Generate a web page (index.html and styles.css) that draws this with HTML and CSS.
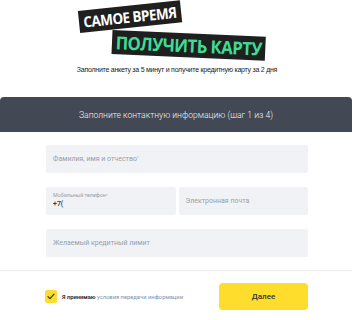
FILE: index.html
```html
<!DOCTYPE html>
<html lang="ru">
<head>
<meta charset="utf-8">
<link rel="stylesheet" href="styles.css">
</head>
<body>
<div class="page">
  <header class="hero">
    <div class="titles">
      <span class="tag tag-white">САМОЕ ВРЕМЯ</span>
      <span class="tag tag-green">ПОЛУЧИТЬ КАРТУ</span>
    </div>
    <p class="subtitle">Заполните анкету за 5 минут и получите кредитную карту за 2 дня</p>
  </header>
  <section class="card">
    <div class="card-head">Заполните контактную информацию (шаг 1 из 4)</div>
    <div class="card-body">
      <div class="field"><span class="ph">Фамилия, имя и отчество<sup>*</sup></span></div>
      <div class="row">
        <div class="field field-filled">
          <span class="label">Мобильный телефон<sup>*</sup></span>
          <span class="value">+7(</span>
        </div>
        <div class="field"><span class="ph">Электронная почта</span></div>
      </div>
      <div class="field"><span class="ph">Желаемый кредитный лимит</span></div>
    </div>
    <div class="card-foot">
      <label class="agree">
        <span class="check"><svg width="8" height="7" viewBox="0 0 8 7"><path d="M1 3.6 L3 5.6 L7 1.2" fill="none" stroke="#333" stroke-width="1.2" stroke-linecap="round" stroke-linejoin="round"/></svg></span>
        <span class="agree-text"><b>Я принимаю</b> <span class="link">условия передачи информации</span></span>
      </label>
      <button class="btn">Далее</button>
    </div>
  </section>
</div>
</body>
</html>
```
FILE: styles.css
```css
* { box-sizing: border-box; }
html, body { margin: 0; padding: 0; background: #ffffff; }
body { font-family: Roboto, "Liberation Sans", Arial, sans-serif; color: #333; }
.page { width: 354px; height: 320px; overflow: hidden; }

.hero { height: 97px; padding-top: 11px; }
.titles { display: flex; flex-direction: column; align-items: flex-start; margin-left: 79px; }
.tag {
  display: inline-block;
  background: #1f1f1f;
  font-family: "Open Sans", "DejaVu Sans", sans-serif;
  font-weight: 700;
  letter-spacing: -0.6px;
  white-space: nowrap;
  transform-origin: left center;
}
.tag-white { color: #ffffff; font-size: 15px; line-height: 22px; padding: 0 5px; transform: rotate(-6deg) scaleX(0.9); }
.tag-green { color: #3ddc97; font-size: 18px; line-height: 24px; padding: 0 4px; margin: -3px 0 0 33px; transform: rotate(2.5deg) scaleX(0.93); }

.subtitle {
  margin: 12px 0 0;
  text-align: center;
  font-family: "Liberation Sans", Arial, sans-serif;
  font-size: 7px;
  letter-spacing: -0.25px;
  color: #222;
}

.card { width: 352px; }
.card-head {
  height: 35px;
  background: #424854;
  border-radius: 4px 4px 0 0;
  color: #f2f3f5;
  font-weight: 300;
  font-size: 8.6px;
  display: flex; align-items: center; justify-content: center;
}
.card-body { padding: 13px 44px 13px 46px; display: flex; flex-direction: column; gap: 14px; }
.row { display: flex; gap: 3px; }
.row .field { flex: 1; }
.field {
  height: 28px;
  background: #f0f2f6;
  border-radius: 2px;
  padding: 0 7px;
  display: flex; flex-direction: column; justify-content: center;
}
.ph { font-size: 7px; color: #9aa0a8; }
.ph sup, .label sup { font-size: 4px; vertical-align: top; }
.field-filled { justify-content: flex-start; padding-top: 5px; }
.label { font-size: 5.4px; color: #9aa0a8; line-height: 7px; }
.value { font-size: 7px; color: #333; font-weight: 500; line-height: 10px; }

.card-foot {
  border-top: 1px solid #ececec;
  padding: 12px 44px 0 45px;
  display: flex; align-items: center; justify-content: space-between;
}
.agree { display: flex; align-items: center; gap: 5px; }
.check {
  width: 12px; height: 13px;
  background: #ffdd2d;
  border-radius: 2px;
  display: flex; align-items: center; justify-content: center;
}
.agree-text { font-size: 5.8px; color: #333; }
.agree-text b { font-weight: 700; }
.link { color: #7d90b0; }
.btn {
  width: 89px; height: 27px;
  background: #ffdd2d;
  border: none;
  border-radius: 4px;
  font-family: Roboto, "Liberation Sans", Arial, sans-serif;
  font-size: 8px;
  font-weight: 500;
  color: #333;
  padding: 0;
}
```
